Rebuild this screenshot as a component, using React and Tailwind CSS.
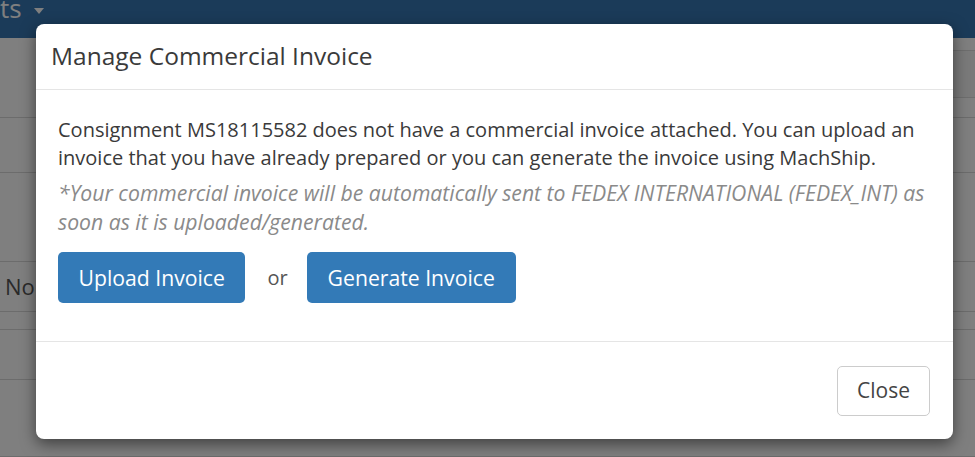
import React from 'react';

const rows = [
  { h: 'h-[55px]', label: '' },
  { h: 'h-[89px]', label: '' },
  { h: 'h-[50px]', label: 'No' },
  { h: 'h-[18px]', label: '' },
  { h: 'h-[50px]', label: '' },
  { h: 'h-[77px]', label: '' },
];

const App = () => {
  return (
    <div className="relative h-[457px] w-[975px] overflow-hidden bg-white font-['Open_Sans',sans-serif]">
      {/* page behind the modal */}
      <div className="flex h-[38px] items-start bg-[#3677b2] text-white">
        <span className="-mt-[8px] text-[26px] leading-[32px]">ts</span>
        <span className="ml-[12px] mt-[8px] h-0 w-0 border-x-[5px] border-t-[6px] border-x-transparent border-t-white"></span>
      </div>
      <div className="flex h-[80px] items-start justify-end border-b border-[#d8d8d8] pt-[12px]">
        <div className="h-[48px] w-[60px] border-l border-y border-[#dcdcdc] bg-[#f4f4f4]"></div>
      </div>
      {rows.map((r, i) => (
        <div key={i} className={`${r.h} flex items-center border-b border-[#d8d8d8] pl-[5px] text-[22px] text-[#555]`}>
          {r.label}
        </div>
      ))}

      <div className="absolute inset-0 bg-black/50"></div>

      {/* modal */}
      <div className="absolute left-[36px] top-[24px] w-[917px] overflow-hidden rounded-[8px] bg-white shadow-[0_5px_15px_rgba(0,0,0,0.5)]">
        <div className="flex h-[66px] items-center border-b border-[#e5e5e5] px-[15px]">
          <h4 className="text-[24.5px] text-[#3a3a3a]">Manage Commercial Invoice</h4>
        </div>
        <div className="px-[22px] pb-[38px] pt-[26px] text-[20px] leading-[28px] text-[#3a3a3a]">
          <p>
            Consignment MS18115582 does not have a commercial invoice attached. You can upload an invoice that you have
            already prepared or you can generate the invoice using MachShip.
          </p>
          <p className="mt-[6px] text-[21.2px] leading-[29px] italic text-[#8a8a8a]">
            *Your commercial invoice will be automatically sent to FEDEX INTERNATIONAL (FEDEX_INT) as soon as it is
            uploaded/generated.
          </p>
          <div className="mt-[16px] flex items-center">
            <button className="h-[51px] rounded-[5px] bg-[#337ab7] px-[20.5px] text-[21.2px] text-white">Upload Invoice</button>
            <span className="ml-[22px] mr-[19px] text-[20px] text-[#555]">or</span>
            <button className="h-[51px] rounded-[5px] bg-[#337ab7] px-[21px] text-[21.2px] text-white">Generate Invoice</button>
          </div>
        </div>
        <div className="flex h-[98px] items-center justify-end border-t border-[#e5e5e5] pr-[23px]">
          <button className="h-[50px] w-[93px] rounded-[5px] border border-[#ccc] bg-white text-[21px] text-[#444]">Close</button>
        </div>
      </div>
    </div>
  );
};

export default App;
